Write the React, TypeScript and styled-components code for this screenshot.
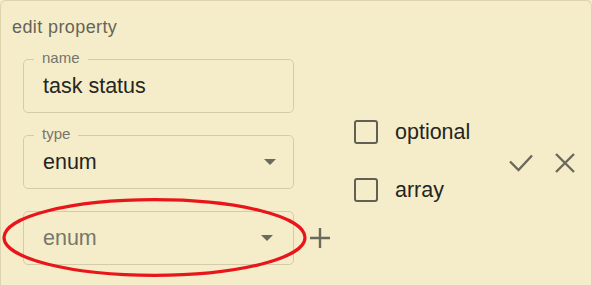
import React from 'react';
import styled, { createGlobalStyle } from 'styled-components';

const GlobalStyle = createGlobalStyle`
	html, body {
		margin: 0;
		padding: 0;
		background: #f5edc9;
		overflow: hidden;
	}
	body {
		font-family: "Liberation Sans", Arial, sans-serif;
	}
`;

const Card = styled.div`
	position: relative;
	box-sizing: border-box;
	width: 592px;
	height: 285px;
	overflow: hidden;
	padding: 16px 0 0 11px;
	background: #f5edc9;
	border: 1px solid #ddd4ae;
	border-bottom: none;
	border-radius: 6px 6px 0 0;
`;

const Title = styled.div`
	font-size: 18px;
	line-height: 21px;
	color: #64645a;
	letter-spacing: 0.4px;
`;

const Body = styled.div`
	display: flex;
	align-items: center;
	margin-top: 21px;
	padding-left: 11px;
`;

const FieldColumn = styled.div`
	display: flex;
	flex-direction: column;
	gap: 22px;
`;

const FieldRow = styled.div`
	display: flex;
	align-items: center;
	gap: 16px;
`;

const FieldBox = styled.div`
	position: relative;
	box-sizing: border-box;
	width: 271px;
	height: 54px;
	display: flex;
	align-items: center;
	justify-content: space-between;
	padding: 0 17px 0 19px;
	border: 1px solid #d3cba9;
	border-radius: 5px;
`;

const FieldLabel = styled.span`
	position: absolute;
	top: -10px;
	left: 10px;
	padding: 0 8px;
	background: #f5edc9;
	font-size: 15px;
	line-height: 16px;
	color: #75756a;
`;

const FieldValue = styled.span<{ $muted?: boolean }>`
	font-size: 21.5px;
	color: ${({ $muted }): string => ($muted ? '#77776c' : '#252521')};
`;

const Arrow = styled.svg<{ $shift?: number }>`
	width: 12px;
	height: 6px;
	margin-right: ${({ $shift }): string => `${$shift ?? 0}px`};
	fill: #6b6a5d;
`;

const IconButton = styled.svg`
	flex: 0 0 auto;
	fill: none;
	stroke: #6b695b;
	stroke-width: 2.4;
	stroke-linecap: square;
`;

const CheckColumn = styled.div`
	display: flex;
	flex-direction: column;
	gap: 33px;
	margin-left: 24px;
	margin-top: -2px;
`;

const CheckRow = styled.label`
	display: flex;
	align-items: center;
	gap: 17px;
	font-size: 21.5px;
	color: #252521;
`;

const CheckBox = styled.span`
	box-sizing: border-box;
	width: 24px;
	height: 24px;
	border: 2.5px solid #626052;
	border-radius: 3px;
`;

const Actions = styled.div`
	display: flex;
	align-items: center;
	gap: 22px;
	margin-left: 39px;
	margin-top: 2px;
`;

const Annotation = styled.svg`
	position: absolute;
	left: 0;
	top: 195px;
	width: 310px;
	height: 84px;
	fill: none;
	stroke: #e8161b;
	stroke-width: 3.2;
`;

interface FieldProps {
	label?: string;
	value: string;
	muted?: boolean;
	select?: boolean;
	arrowShift?: number;
}

const Field: React.FC<FieldProps> = ({ label, value, muted, select, arrowShift }) => (
	<FieldBox>
		{label && <FieldLabel>{label}</FieldLabel>}
		<FieldValue $muted={muted}>{value}</FieldValue>
		{select && (
			<Arrow viewBox="0 0 12 6" $shift={arrowShift}>
				<path d="M0 0h12L6 6z" />
			</Arrow>
		)}
	</FieldBox>
);

const App: React.FC = () => (
	<>
		<GlobalStyle />
		<Card>
			<Title>edit property</Title>
			<Body>
				<FieldColumn>
					<Field label="name" value="task status" />
					<Field label="type" value="enum" select />
					<FieldRow>
						<Field value="enum" muted select arrowShift={3} />
						<IconButton width="20" height="20" viewBox="0 0 20 20">
							<path d="M10 0.5v19M0.5 10h19" />
						</IconButton>
					</FieldRow>
				</FieldColumn>
				<CheckColumn>
					<CheckRow>
						<CheckBox />
						optional
					</CheckRow>
					<CheckRow>
						<CheckBox />
						array
					</CheckRow>
				</CheckColumn>
				<Actions>
					<IconButton width="24" height="18" viewBox="0 0 24 18">
						<path d="M1 7.5l8.5 8.5L23 1.5" strokeLinecap="butt" />
					</IconButton>
					<IconButton width="20" height="20" viewBox="0 0 20 20">
						<path d="M1 1l18 18M19 1L1 19" strokeLinecap="butt" />
					</IconButton>
				</Actions>
			</Body>
			<Annotation viewBox="0 0 310 84">
				<ellipse cx="153.5" cy="41.5" rx="150.5" ry="37.8" />
			</Annotation>
		</Card>
	</>
);

export default App;
